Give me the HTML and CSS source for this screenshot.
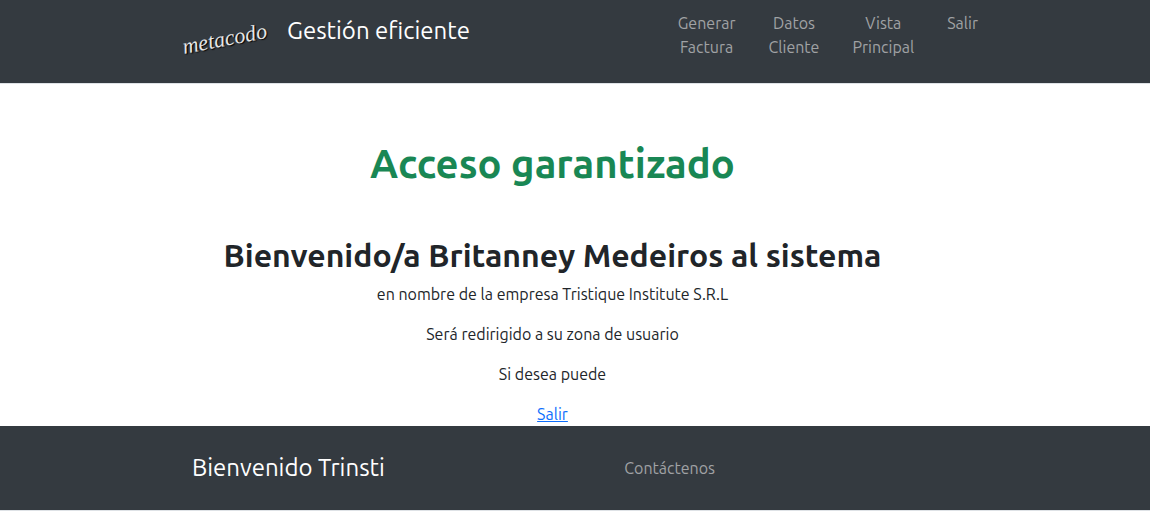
FILE: index.html
```html
<!DOCTYPE html>
<html lang="es">
<head>
<meta charset="utf-8">
<meta name="viewport" content="width=device-width, initial-scale=1">
<title>Acceso garantizado</title>
<link rel="stylesheet" href="styles.css">
</head>
<body>
<header class="bar bar-top">
  <div class="container">
    <div class="brand">
      <svg class="logo" viewBox="0 0 96 52" role="img" aria-label="metacodo">
        <text class="logo-text" x="4" y="43" transform="rotate(-11 4 43)">metacodo</text>
      </svg>
      <span class="brand-name">Gestión eficiente</span>
    </div>
    <nav>
      <ul class="menu">
        <li><a href="#factura">Generar Factura</a></li>
        <li><a href="#cliente">Datos Cliente</a></li>
        <li><a href="#principal">Vista Principal</a></li>
        <li><a href="#salir">Salir</a></li>
      </ul>
    </nav>
  </div>
</header>
<main class="content">
  <h1>Acceso garantizado</h1>
  <h2>Bienvenido/a Britanney Medeiros al sistema</h2>
  <p>en nombre de la empresa Tristique Institute S.R.L</p>
  <p>Será redirigido a su zona de usuario</p>
  <p>Si desea puede</p>
  <a class="exit" href="#salir">Salir</a>
</main>
<footer class="bar bar-bottom">
  <div class="container footer-row">
    <span class="footer-name">Bienvenido Trinsti</span>
    <a class="contact" href="#contacto">Contáctenos</a>
  </div>
</footer>
</body>
</html>
```
FILE: styles.css
```css
* { box-sizing: border-box; }
body {
  margin: 0;
  background: #fff;
  color: #212529;
  font: 400 16px/24px Ubuntu, "Noto Sans", sans-serif;
}
.bar {
  background: #343a40;
  border-bottom: 1px solid #dee2e6;
}
.container {
  display: flex;
  justify-content: space-between;
  max-width: 806px;
  margin: 0 auto;
}
.bar-top { padding: 11px 0 12px; }
.brand {
  display: flex;
  gap: 11px;
  padding-left: 8px;
}
.logo {
  flex: none;
  width: 96px;
  height: 52px;
}
.logo-text {
  fill: #e6e6e6;
  font: italic 400 22px "Liberation Serif", serif;
  text-shadow: 1px 1px 1px #000;
}
.brand-name, .footer-name {
  color: #fff;
  font-size: 24px;
  line-height: 40px;
}
.menu {
  display: flex;
  gap: 33px;
  margin: 0;
  padding: 0 0 12px;
  list-style: none;
  text-align: center;
}
.menu li { width: min-content; }
.menu a, .contact {
  color: #a0a2a5;
  text-decoration: none;
}
.content {
  padding: 56px 45px 0 0;
  text-align: center;
}
h1, h2 {
  margin: 0;
  font-weight: 600;
}
h1 {
  margin-bottom: 48px;
  color: #198754;
  font-size: 40px;
  line-height: 48px;
}
h2 {
  margin-bottom: 8px;
  font-size: 32px;
  line-height: 38px;
}
p { margin: 0 0 16px; }
.exit {
  display: block;
  width: max-content;
  margin: 0 auto;
  color: #0d6efd;
}
.bar-bottom { padding: 22px 0; }
.footer-row {
  display: grid;
  grid-template-columns: 11fr 9fr;
  align-items: center;
  padding-left: 20px;
}
```
